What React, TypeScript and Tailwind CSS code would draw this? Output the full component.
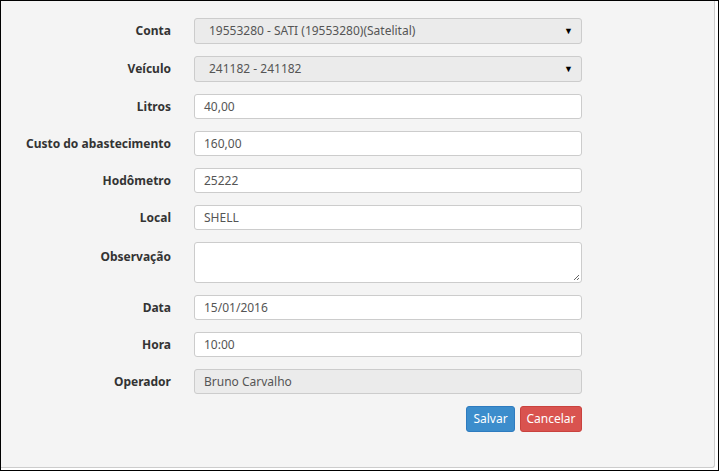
export default function App() {
  const F = "font-['Liberation_Sans',Arial,sans-serif]";
  const rows: [string, string, string][] = [
    ["Litros", "40,00", "input"],
    ["Custo do abastecimento", "160,00", "input"],
    ["Hodômetro", "25222", "input"],
    ["Local", "SHELL", "input"],
    ["Observação", "", "textarea"],
    ["Data", "15/01/2016", "input"],
    ["Hora", "10:00", "input"],
    ["Operador", "Bruno Carvalho", "disabled"],
  ];
  const Label = ({ t, top }: { t: string; top?: boolean }) => (
    <div className={`w-[170px] text-right font-bold text-[12px] text-[#333] ${top ? "pt-[6px]" : "leading-[25px]"}`}>{t}</div>
  );
  const Select = ({ v }: { v: string }) => (
    <div className="w-[388px] h-[26px] rounded-[3px] border border-[#ccc] bg-[#ebebeb] flex items-center justify-between pl-[14px] pr-[8px] text-[12px] text-[#555]">
      <span>{v}</span>
      <span className="text-[9px] text-black">▼</span>
    </div>
  );
  return (
    <div className={`w-[719px] h-[471px] border border-black bg-white ${F}`}>
      <div className="w-[714px] h-[467px] bg-[#f4f4f4] border-r border-b border-[#ccc] rounded-br-[3px] pt-[17px]">
        <div className="flex flex-col gap-[12px]">
          <div className="flex gap-[23px]"><Label t="Conta" /><Select v="19553280 - SATI (19553280)(Satelital)" /></div>
          <div className="flex gap-[23px]"><Label t="Veículo" /><Select v="241182 - 241182" /></div>
          {rows.map(([l, v, k]) => (
            <div key={l} className="flex gap-[23px]">
              <Label t={l} top={k === "textarea"} />
              {k === "textarea" ? (
                <div className="relative w-[388px] h-[41px] rounded-[3px] border border-[#ccc] bg-white">
                  <svg className="absolute right-[1px] bottom-[1px]" width="7" height="7"><path d="M6 1L1 6M6 4L4 6" stroke="#666" strokeWidth="1" /></svg>
                </div>
              ) : (
                <div className={`w-[388px] h-[25px] rounded-[3px] border border-[#ccc] flex items-center px-[9px] text-[12px] text-[#555] ${k === "disabled" ? "bg-[#ebebeb]" : "bg-white"}`}>{v}</div>
              )}
            </div>
          ))}
          <div className="flex justify-end gap-[5px] w-[581px]">
            <button className="w-[49px] h-[26px] rounded-[3px] bg-[#3c8dcc] border border-[#2e7bbf] text-white text-[12px]">Salvar</button>
            <button className="w-[62px] h-[26px] rounded-[3px] bg-[#d9534f] border border-[#c9423e] text-white text-[12px]">Cancelar</button>
          </div>
        </div>
      </div>
    </div>
  );
}
